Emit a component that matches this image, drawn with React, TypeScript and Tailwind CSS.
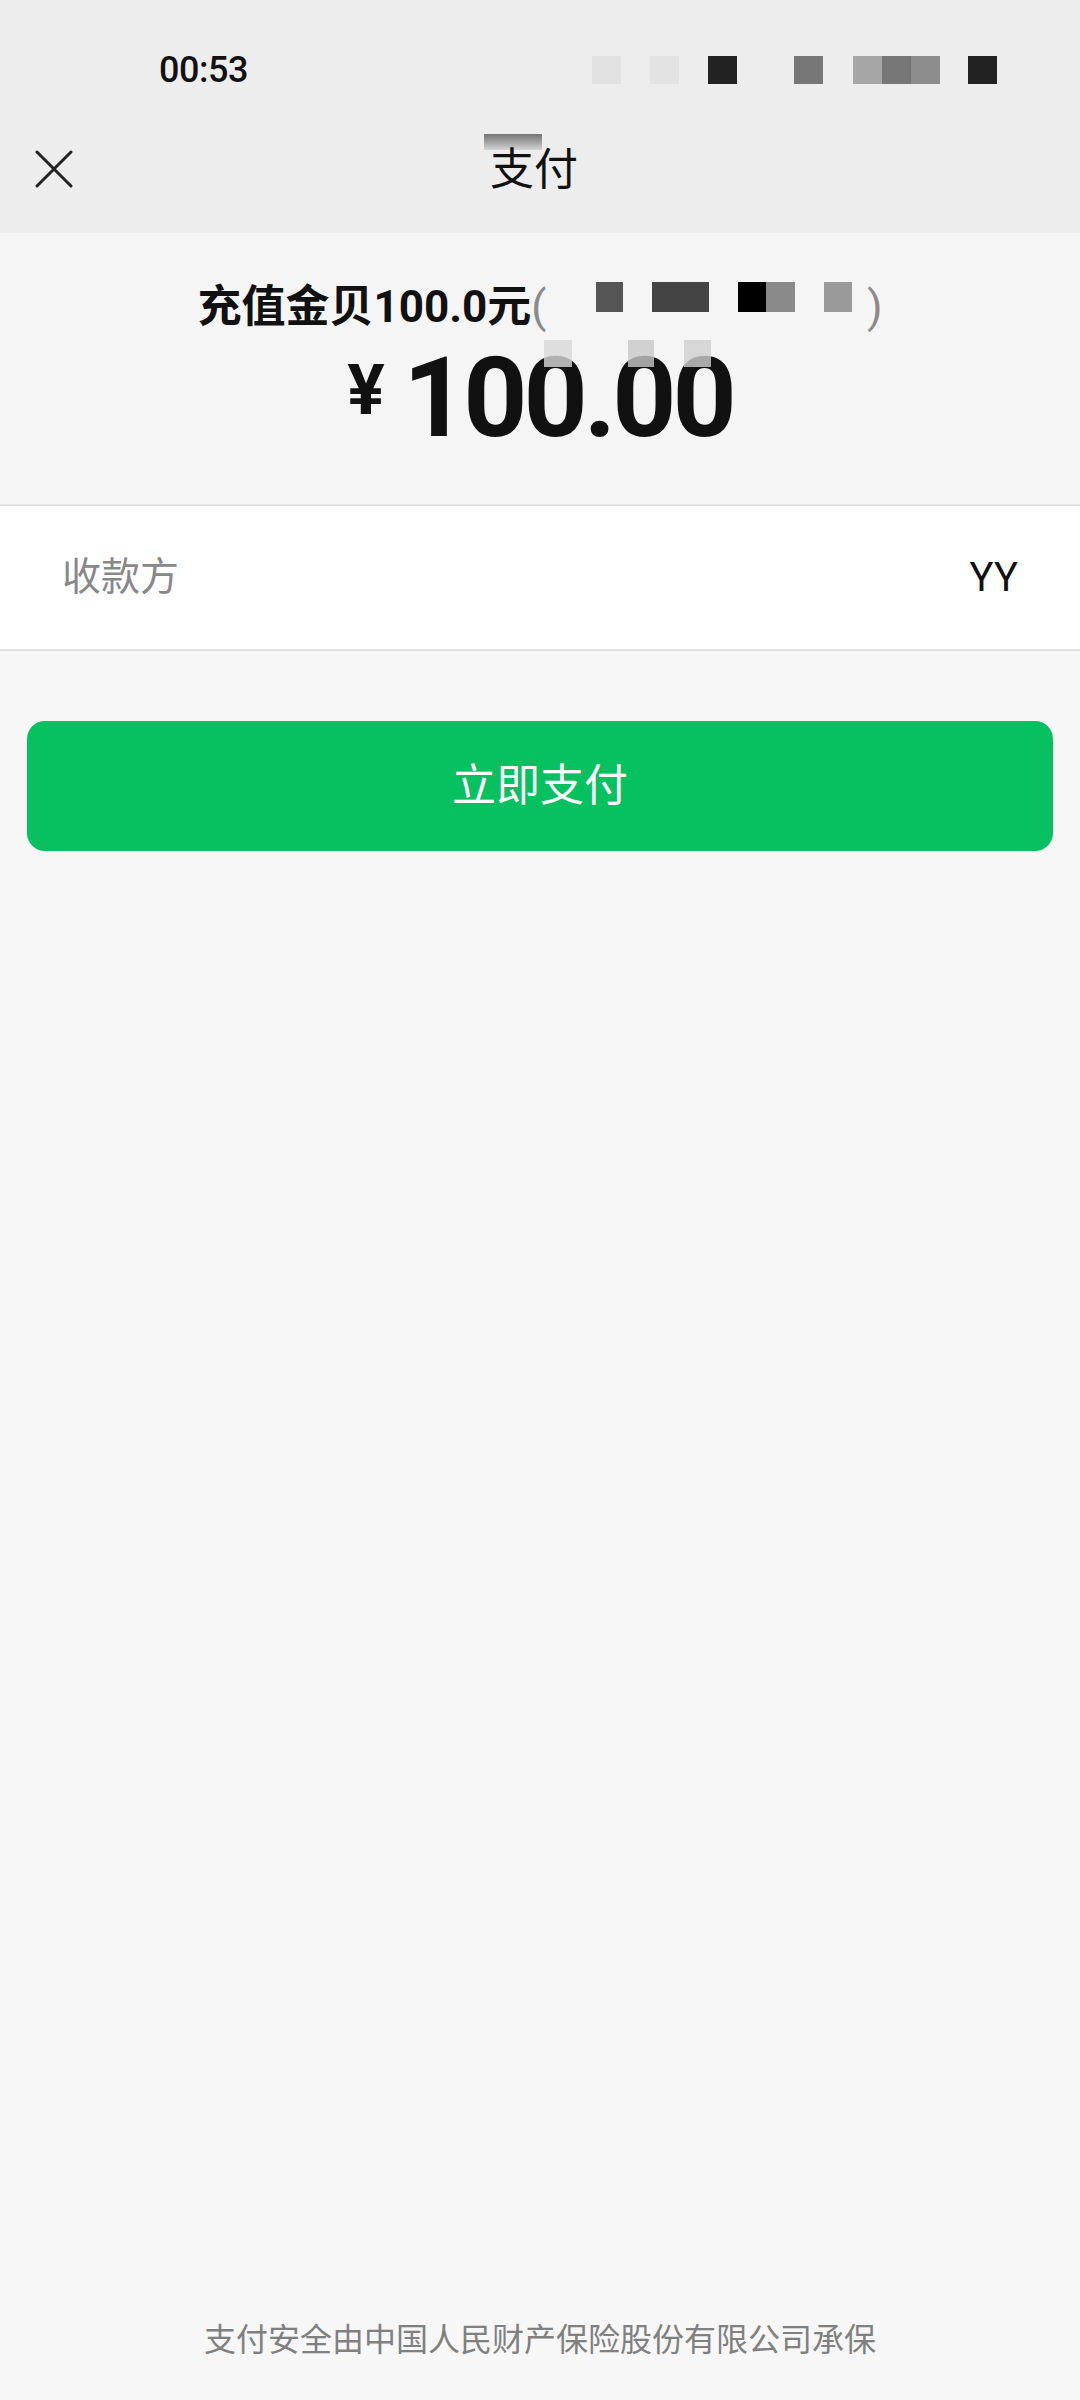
import React from 'react';

const cjk = "Roboto, 'Noto Sans CJK SC', sans-serif";

function CloseIcon() {
  return (
    <svg width="38" height="38" viewBox="0 0 38 38" fill="none">
      <path d="M2 2L36 36M36 2L2 36" stroke="#222222" strokeWidth="3" strokeLinecap="round" />
    </svg>
  );
}

// pixelated status-bar icons, as they appear in the screenshot
const statusBlocks = [
  { ml: 'ml-0', c: 'bg-[#e1e1e1]' },
  { ml: 'ml-[29px]', c: 'bg-[#e3e3e3]' },
  { ml: 'ml-[29px]', c: 'bg-[#222222]' },
  { ml: 'ml-[57px]', c: 'bg-[#777777]' },
  { ml: 'ml-[30px]', c: 'bg-[#a6a6a6]' },
  { ml: 'ml-0', c: 'bg-[#777777]' },
  { ml: 'ml-0', c: 'bg-[#8c8c8c]' },
  { ml: 'ml-[28px]', c: 'bg-[#222222]' },
];

export default function App() {
  return (
    <div className="min-h-[2400px] flex flex-col bg-[#f7f7f7]" style={{ fontFamily: cjk }}>
      {/* header */}
      <div className="bg-[#ededed]">
        <div className="h-[140px] flex items-center justify-between pl-[159px] pr-[83px]">
          <span className="text-[36px] font-medium text-[#111111] tracking-[-0.5px]">00:53</span>
          <div className="flex items-center">
            {statusBlocks.map((b, i) => (
              <div key={i} className={`w-[29px] h-[28px] ${b.ml} ${b.c}`} />
            ))}
          </div>
        </div>
        <div className="relative h-[60px] flex items-center justify-center">
          <div className="absolute left-[35px] top-[10px]">
            <CloseIcon />
          </div>
          <div className="relative">
            <div className="absolute left-[-6px] top-[-14px] w-[58px] h-[16px] bg-gradient-to-b from-[#555555] to-[#cfcfcf] opacity-80" />
            <span className="relative text-[44px] leading-none text-[#111111] mr-[12px]">支付</span>
          </div>
        </div>
        <div className="h-[33px]" />
      </div>

      {/* order summary */}
      <div className="relative bg-[#f5f5f5] pt-[46px] pb-[50px] flex flex-col items-center border-b-2 border-[#e3e3e3]">
        <div className="flex items-center h-[56px] text-[44px] font-bold text-[#111111] leading-none">
          <span>充值金贝100.0元</span>
          <span className="font-normal text-[#8a8a8a]">(</span>
          <div className="flex items-center w-[321px] h-[30px] -mt-[20px]">
            <div className="ml-[50px] w-[27px] h-[30px] bg-[#555555]" />
            <div className="ml-[29px] w-[57px] h-[30px] bg-[#444444]" />
            <div className="ml-[29px] w-[28px] h-[30px] bg-[#000000]" />
            <div className="w-[29px] h-[30px] bg-[#8a8a8a]" />
            <div className="ml-[29px] w-[28px] h-[30px] bg-[#9a9a9a]" />
          </div>
          <span className="font-normal text-[#8a8a8a]">)</span>
        </div>
        <div className="mt-[7px] flex items-center h-[112px] text-[#111111] font-bold" style={{ fontFamily: 'Roboto, sans-serif' }}>
          <span className="text-[70px] leading-none -mt-[16px] mr-[18px]">¥</span>
          <span className="text-[112px] leading-none tracking-[-4px] font-bold">100.00</span>
        </div>
        <div className="absolute left-[544px] top-[107px] w-[28px] h-[27px] bg-[#d8d8d8] opacity-80" />
        <div className="absolute left-[628px] top-[107px] w-[26px] h-[27px] bg-[#c8c8c8] opacity-80" />
        <div className="absolute left-[684px] top-[107px] w-[27px] h-[27px] bg-[#d0d0d0] opacity-80" />
      </div>

      {/* payee */}
      <div className="bg-white h-[145px] flex items-center justify-between px-[62px] border-b-2 border-[#e3e3e3]">
        <span className="text-[39px] text-[#888888]">收款方</span>
        <span className="text-[40px] text-[#111111]">YY</span>
      </div>

      {/* pay button */}
      <div className="px-[27px] pt-[70px]">
        <button className="w-full h-[130px] rounded-[18px] bg-[#07c160] text-white text-[44px] flex items-center justify-center">
          立即支付
        </button>
      </div>

      {/* footer */}
      <div className="mt-auto pb-[37px] flex justify-center">
        <span className="text-[32px] leading-[46px] text-[#808080]">支付安全由中国人民财产保险股份有限公司承保</span>
      </div>
    </div>
  );
}
